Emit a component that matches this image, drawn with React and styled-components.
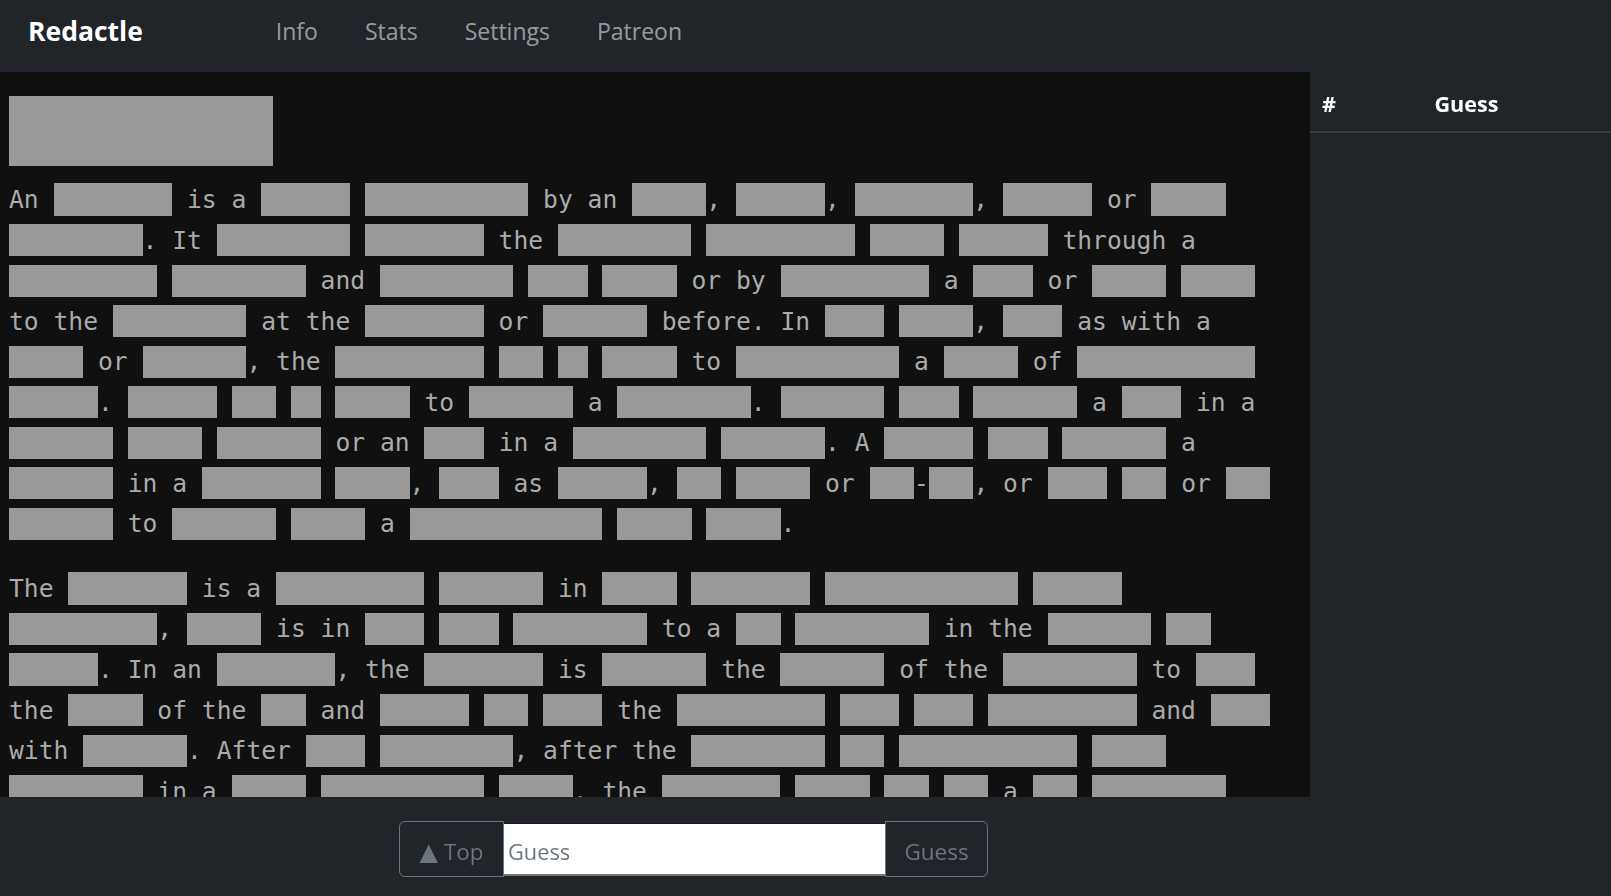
import React from 'react';
import styled, { createGlobalStyle } from 'styled-components';

const GlobalStyle = createGlobalStyle`
  html, body {
    margin: 0;
    height: 100%;
    background: #212529;
  }
  body {
    font-family: "Open Sans", "Noto Sans", sans-serif;
    overflow: hidden;
  }
  #root {
    height: 100%;
  }
`;

const Page = styled.div`
  display: flex;
  flex-direction: column;
  height: 100vh;
`;

const Navbar = styled.nav`
  height: 72px;
  flex-shrink: 0;
  box-sizing: border-box;
  display: flex;
  align-items: center;
  padding: 0 0 10px 28px;
  background: #212529;
`;

const Brand = styled.a`
  font-size: 26.5px;
  font-weight: 700;
  color: #fff;
  text-decoration: none;
  margin-right: 133px;
`;

const NavLinks = styled.div`
  display: flex;
  gap: 47px;
`;

const NavLink = styled.a`
  font-size: 23px;
  color: rgba(255, 255, 255, 0.55);
  text-decoration: none;
  cursor: pointer;
`;

const Main = styled.div`
  flex: 1;
  min-height: 0;
  display: flex;
`;

const Article = styled.main`
  width: 1310px;
  flex-shrink: 0;
  box-sizing: border-box;
  padding: 24px 9px 40px;
  background: #101010;
  overflow-y: auto;
  scrollbar-width: none;
  &::-webkit-scrollbar {
    display: none;
  }
`;

const TitleBlock = styled.div`
  width: 264px;
  height: 70px;
  background: #999;
  margin-bottom: 14px;
`;

const Paragraph = styled.p`
  width: 85.5ch;
  margin: 0 0 24px;
  font-family: "DejaVu Sans Mono", "Liberation Mono", monospace;
  font-size: 24.65px;
  line-height: 40.55px;
  color: #ababab;
`;

const Redacted = styled.span`
  background: #999;
  padding: 1.6px 0;
`;

const Sidebar = styled.aside`
  flex: 1;
  background: #212529;
`;

const GuessHeader = styled.div`
  display: grid;
  grid-template-columns: 36px 1fr;
  align-items: center;
  box-sizing: border-box;
  height: 61px;
  padding: 4px 36px 0 12px;
  border-bottom: 2px solid #393d42;
  font-size: 21.6px;
  font-weight: 700;
  color: #fff;
`;

const HeaderCell = styled.div`
  text-align: ${({ $center }) => ($center ? 'center' : 'left')};
`;

const BottomBar = styled.footer`
  height: 99px;
  flex-shrink: 0;
  box-sizing: border-box;
  display: flex;
  align-items: flex-start;
  padding: 24px 0 0 399px;
  background: #212529;
`;

const InputGroup = styled.form`
  display: flex;
  height: 56px;
`;

const OutlineButton = styled.button`
  width: ${({ $width }) => $width}px;
  box-sizing: border-box;
  padding: 4px 0 0;
  background: transparent;
  border: 1px solid #6c757d;
  border-radius: ${({ $side }) => ($side === 'left' ? '6px 0 0 6px' : '0 6px 6px 0')};
  color: #6c757d;
  font-family: "Open Sans", "Noto Sans", sans-serif;
  font-size: 22.5px;
  cursor: pointer;
`;

const Arrow = styled.span`
  font-family: "DejaVu Sans", sans-serif;
  font-size: 24px;
  margin-right: 6px;
`;

const GuessInput = styled.input`
  width: 381px;
  height: 53px;
  align-self: center;
  box-sizing: border-box;
  padding: 5px 4px 0;
  border: none;
  border-top: 1px solid #1b1b1b;
  border-bottom: 2px solid #767676;
  background: #fff;
  font-family: "Open Sans", "Noto Sans", sans-serif;
  font-size: 21.8px;
  outline: none;
  &::placeholder {
    color: #6c757d;
  }
`;

const paragraphs = [
  [
    'An [8] is a [6] [11] by an [5], [6], [8], [6] or [5]',
    '[9]. It [9] [8] the [9] [10] [5] [6] through a',
    '[10] [9] and [9] [4] [5] or by [10] a [4] or [5] [5]',
    'to the [9] at the [8] or [7] before. In [4] [5], [4] as with a',
    '[5] or [7], the [10] [3] [2] [5] to [11] a [5] of [12]',
    '[6]. [6] [3] [2] [5] to [7] a [9]. [7] [4] [7] a [4] in a',
    '[7] [5] [7] or an [4] in a [9] [7]. A [6] [4] [7] a',
    '[7] in a [8] [5], [4] as [6], [3] [5] or [3]-[3], or [4] [3] or [3]',
    '[7] to [7] [5] a [13] [5] [5].',
  ],
  [
    'The [8] is a [10] [7] in [5] [8] [13] [6]',
    '[10], [5] is in [4] [4] [9] to a [3] [9] in the [7] [3]',
    '[6]. In an [8], the [8] is [7] the [7] of the [9] to [4]',
    'the [5] of the [3] and [6] [3] [4] the [10] [4] [4] [10] and [4]',
    'with [7]. After [4] [9], after the [9] [3] [12] [5]',
    '[9] in a [5] [11] [5]. the [8] [5] [3] [3] a [3] [9]',
    '[6] and [8] [4] in the [7] of [9]. The [6] [5] [10] to the [7]',
    '[5] [8] as a [6] [9].',
  ],
  [
    '[7] [9] [5] is [4] [10] of the [6] [8], [5] in the [9] [4] [6]',
    '[8] to [6] [7] and [5] [9] [4] a [10] in [6].',
  ],
];

const renderLine = (text) =>
  text
    .split(/(\[\d+\])/)
    .filter(Boolean)
    .map((part, i) => {
      const m = part.match(/^\[(\d+)\]$/);
      return m ? <Redacted key={i}>{'\u00a0'.repeat(Number(m[1]))}</Redacted> : part;
    });

const App = () => {
  return (
    <Page>
      <GlobalStyle />
      <Navbar>
        <Brand href="#">Redactle</Brand>
        <NavLinks>
          <NavLink>Info</NavLink>
          <NavLink>Stats</NavLink>
          <NavLink>Settings</NavLink>
          <NavLink>Patreon</NavLink>
        </NavLinks>
      </Navbar>
      <Main>
        <Article>
          <TitleBlock />
          {paragraphs.map((lines, index) => (
            <Paragraph key={index}>{renderLine(lines.join(' '))}</Paragraph>
          ))}
        </Article>
        <Sidebar>
          <GuessHeader>
            <HeaderCell>#</HeaderCell>
            <HeaderCell $center>Guess</HeaderCell>
          </GuessHeader>
        </Sidebar>
      </Main>
      <BottomBar>
        <InputGroup onSubmit={(e) => e.preventDefault()}>
          <OutlineButton type="button" $side="left" $width={105}>
            <Arrow>▲</Arrow>Top
          </OutlineButton>
          <GuessInput placeholder="Guess" />
          <OutlineButton type="submit" $side="right" $width={103}>
            Guess
          </OutlineButton>
        </InputGroup>
      </BottomBar>
    </Page>
  );
};

export default App;
